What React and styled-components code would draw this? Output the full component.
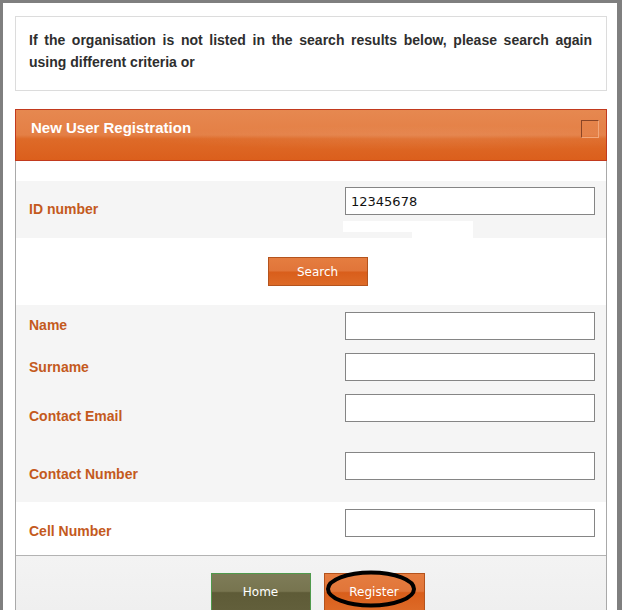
import React from "react";
import styled, { createGlobalStyle } from "styled-components";

const GlobalStyle = createGlobalStyle`
  html, body {
    margin: 0;
    padding: 0;
    background: #ffffff;
  }
  body {
    font-family: "Liberation Sans", Arial, sans-serif;
  }
`;

const Frame = styled.div`
  width: 622px;
  min-height: 680px;
  box-sizing: border-box;
  border-top: 3px solid #7f7f7f;
  border-left: 3px solid #7f7f7f;
  border-right: 5px solid #7f7f7f;
  background: #fff;
  padding: 13px 10px 0 12px;
`;

const Notice = styled.div`
  border: 1px solid #dcdcdc;
  padding: 12px 14px 17px 13px;
  font-size: 14px;
  line-height: 22px;
  font-weight: bold;
  color: #2e2e2e;
  text-align: justify;
`;

const PanelHeader = styled.div`
  margin-top: 18px;
  height: 52px;
  box-sizing: border-box;
  border: 1px solid #c23a1e;
  display: flex;
  justify-content: space-between;
  align-items: flex-start;
  padding: 10px 7px 0 15px;
  background:
    radial-gradient(ellipse 420px 18px at 70% 56%, rgba(255, 255, 255, 0.08), rgba(255, 255, 255, 0) 70%),
    linear-gradient(to bottom, #e68850 0%, #e47f45 50%, #de6a28 58%, #db5f1c 100%);
`;

const PanelTitle = styled.h2`
  margin: 0;
  font-size: 15px;
  line-height: 16px;
  font-weight: bold;
  color: #ffffff;
`;

const Toggle = styled.span`
  display: block;
  width: 18px;
  height: 18px;
  box-sizing: border-box;
  border-top: 1px solid #8a4526;
  border-left: 1px solid #8a4526;
  border-right: 1px solid #f2a77a;
  border-bottom: 1px solid #f2a77a;
`;

const PanelBody = styled.div`
  border: 1px solid #a9a9a9;
  border-top: none;
  padding-top: 20px;
`;

const Row = styled.div`
  display: grid;
  grid-template-columns: 1fr 250px;
  align-items: start;
  height: ${(p) => p.$height}px;
  box-sizing: border-box;
  padding: ${(p) => p.$pad ?? 7}px 11px 0 13px;
  background: ${(p) => (p.$shade ? "#f5f5f5" : "#ffffff")};
`;

const Label = styled.label`
  display: block;
  margin-top: ${(p) => p.$drop ?? 14}px;
  font-size: 14px;
  line-height: 16px;
  font-weight: bold;
  color: #c45a1d;
`;

const TextInput = styled.input`
  display: block;
  width: 250px;
  height: 28px;
  box-sizing: border-box;
  margin: 0;
  border: 1px solid #858585;
  background: #fff;
  padding: 0 5px;
  font-family: "DejaVu Sans", Tahoma, sans-serif;
  font-size: 13px;
  color: #111;
  outline: none;
`;

const Hint = styled.div`
  display: flex;
  align-items: flex-start;
  margin: 6px 0 0 -2px;
`;

const HintChunk = styled.span`
  display: block;
  width: ${(p) => p.$w}px;
  height: ${(p) => p.$h}px;
  background: #ffffff;
`;

const ButtonRow = styled.div`
  display: flex;
  justify-content: center;
  gap: 13px;
  padding-left: 13px;
  height: ${(p) => p.$height}px;
  box-sizing: border-box;
  padding-top: ${(p) => p.$top}px;
`;

const Footer = styled(ButtonRow)`
  border-top: 1px solid #b3b3b3;
  background: linear-gradient(to bottom, #f3f3f3 0%, #efefef 70%, #e6e6e6 74%, #e4e4e4 100%);
`;

const Button = styled.button`
  width: ${(p) => p.$w ?? 100}px;
  height: ${(p) => p.$h ?? 29}px;
  margin: 0;
  padding: 0;
  box-sizing: border-box;
  font-family: "DejaVu Sans", Tahoma, sans-serif;
  font-size: 12px;
  color: #ffffff;
  cursor: pointer;
  border: 1px solid ${(p) => (p.$variant === "olive" ? "#4f9a4c" : "#b4531d")};
  background: ${(p) =>
    p.$variant === "olive"
      ? "linear-gradient(to bottom, #7e7c58 0%, #77744f 48%, #5e5b37 52%, #625f3b 100%)"
      : "linear-gradient(to bottom, #e57d40 0%, #e17539 48%, #d95e1b 52%, #dd6a27 100%)"};
`;

const Marked = styled.div`
  position: relative;
`;

const Circle = styled.svg`
  position: absolute;
  left: 1px;
  top: -4px;
  pointer-events: none;
`;

export default function App() {
  return (
    <>
      <GlobalStyle />
      <Frame>
        <Notice>
          If the organisation is not listed in the search results below, please search again
          using different criteria or
        </Notice>

        <PanelHeader>
          <PanelTitle>New User Registration</PanelTitle>
          <Toggle />
        </PanelHeader>

        <PanelBody>
          <Row $shade $height={57} $pad={6}>
            <Label>ID number</Label>
            <div>
              <TextInput defaultValue="12345678" />
              <Hint>
                <HintChunk $w={69} $h={11} />
                <HintChunk $w={61} $h={17} />
              </Hint>
            </div>
          </Row>

          <ButtonRow $height={67} $top={19}>
            <Button>Search</Button>
          </ButtonRow>

          <Row $shade $height={41}>
            <Label $drop={5}>Name</Label>
            <TextInput />
          </Row>
          <Row $shade $height={41}>
            <Label $drop={6}>Surname</Label>
            <TextInput />
          </Row>
          <Row $shade $height={58}>
            <Label>Contact Email</Label>
            <TextInput />
          </Row>
          <Row $shade $height={57}>
            <Label>Contact Number</Label>
            <TextInput />
          </Row>
          <Row $height={53}>
            <Label>Cell Number</Label>
            <TextInput />
          </Row>

          <Footer $height={80} $top={17}>
            <Button $variant="olive" $h={38}>Home</Button>
            <Marked>
              <Button $w={101} $h={38}>Register</Button>
              <Circle width="93" height="42" viewBox="0 0 93 42">
                <ellipse cx="46" cy="20" rx="43" ry="16.5" fill="none" stroke="#000" strokeWidth="4" />
              </Circle>
            </Marked>
          </Footer>
        </PanelBody>
      </Frame>
    </>
  );
}
